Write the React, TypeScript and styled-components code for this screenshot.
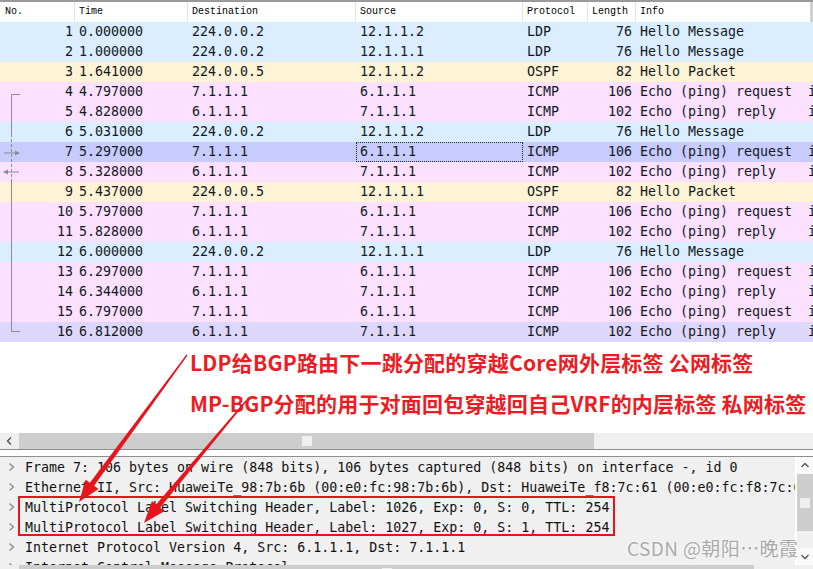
import styled, {createGlobalStyle, css} from "styled-components";

type Packet = {
    no: number
    time: string
    dst: string
    src: string
    proto: string
    len: number
    info: string
}

const REQ = 'Echo (ping) request  id=0x0001, seq=1/256, ttl=254 (reply in 8)'
const REP = 'Echo (ping) reply    id=0x0001, seq=1/256, ttl=254 (request in 7)'

const packets: Packet[] = [
    {no: 1, time: '0.000000', dst: '224.0.0.2', src: '12.1.1.2', proto: 'LDP', len: 76, info: 'Hello Message'},
    {no: 2, time: '1.000000', dst: '224.0.0.2', src: '12.1.1.1', proto: 'LDP', len: 76, info: 'Hello Message'},
    {no: 3, time: '1.641000', dst: '224.0.0.5', src: '12.1.1.2', proto: 'OSPF', len: 82, info: 'Hello Packet'},
    {no: 4, time: '4.797000', dst: '7.1.1.1', src: '6.1.1.1', proto: 'ICMP', len: 106, info: REQ},
    {no: 5, time: '4.828000', dst: '6.1.1.1', src: '7.1.1.1', proto: 'ICMP', len: 102, info: REP},
    {no: 6, time: '5.031000', dst: '224.0.0.2', src: '12.1.1.2', proto: 'LDP', len: 76, info: 'Hello Message'},
    {no: 7, time: '5.297000', dst: '7.1.1.1', src: '6.1.1.1', proto: 'ICMP', len: 106, info: REQ},
    {no: 8, time: '5.328000', dst: '6.1.1.1', src: '7.1.1.1', proto: 'ICMP', len: 102, info: REP},
    {no: 9, time: '5.437000', dst: '224.0.0.5', src: '12.1.1.1', proto: 'OSPF', len: 82, info: 'Hello Packet'},
    {no: 10, time: '5.797000', dst: '7.1.1.1', src: '6.1.1.1', proto: 'ICMP', len: 106, info: REQ},
    {no: 11, time: '5.828000', dst: '6.1.1.1', src: '7.1.1.1', proto: 'ICMP', len: 102, info: REP},
    {no: 12, time: '6.000000', dst: '224.0.0.2', src: '12.1.1.1', proto: 'LDP', len: 76, info: 'Hello Message'},
    {no: 13, time: '6.297000', dst: '7.1.1.1', src: '6.1.1.1', proto: 'ICMP', len: 106, info: REQ},
    {no: 14, time: '6.344000', dst: '6.1.1.1', src: '7.1.1.1', proto: 'ICMP', len: 102, info: REP},
    {no: 15, time: '6.797000', dst: '7.1.1.1', src: '6.1.1.1', proto: 'ICMP', len: 106, info: REQ},
    {no: 16, time: '6.812000', dst: '6.1.1.1', src: '7.1.1.1', proto: 'ICMP', len: 102, info: REP},
]

const protoColor: Record<string, string> = {
    LDP: '#daeeff',
    OSPF: '#fff3d6',
    ICMP: '#fce0ff',
}

const rowBg = (p: Packet) => {
    if (p.no === 7) return '#c8cbfd'
    if (p.no === 16) return '#ddd7fb'
    return protoColor[p.proto]
}

const details = [
    'Frame 7: 106 bytes on wire (848 bits), 106 bytes captured (848 bits) on interface -, id 0',
    'Ethernet II, Src: HuaweiTe_98:7b:6b (00:e0:fc:98:7b:6b), Dst: HuaweiTe_f8:7c:61 (00:e0:fc:f8:7c:61)',
    'MultiProtocol Label Switching Header, Label: 1026, Exp: 0, S: 0, TTL: 254',
    'MultiProtocol Label Switching Header, Label: 1027, Exp: 0, S: 1, TTL: 254',
    'Internet Protocol Version 4, Src: 6.1.1.1, Dst: 7.1.1.1',
    'Internet Control Message Protocol',
]

// tapered red arrow, thin at the start, head at the tip
const arrowPoints = (sx: number, sy: number, tx: number, ty: number) => {
    const dx = tx - sx, dy = ty - sy
    const len = Math.hypot(dx, dy)
    const ux = dx / len, uy = dy / len
    const nx = -uy, ny = ux
    const head = 22, hw = 8, w0 = 0.6, w1 = 2.6
    const bx = tx - ux * head, by = ty - uy * head
    const pts = [
        [sx + nx * w0, sy + ny * w0],
        [bx + nx * w1, by + ny * w1],
        [bx + nx * hw, by + ny * hw],
        [tx, ty],
        [bx - nx * hw, by - ny * hw],
        [bx - nx * w1, by - ny * w1],
        [sx - nx * w0, sy - ny * w0],
    ]
    return pts.map(p => p.map(v => v.toFixed(1)).join(',')).join(' ')
}

const Chevron = () => (
    <ChevronIcon width="7" height="10" viewBox="0 0 7 10">
        <polyline points="1.5,1.5 5.5,5 1.5,8.5" fill="none" stroke="#8a8a8a" strokeWidth="1.3"/>
    </ChevronIcon>
)

const Arrow = ({dir}: { dir: 'up' | 'down' | 'left' }) => {
    const pts = dir === 'up' ? '1.5,6 5,2.5 8.5,6' : dir === 'down' ? '1.5,3 5,6.5 8.5,3' : '6,1.5 2.5,5 6,8.5'
    return (
        <svg width="10" height="10" viewBox="0 0 10 10">
            <polyline points={pts} fill="none" stroke="#555" strokeWidth="1.4"/>
        </svg>
    )
}

function App() {
    return (
        <Page>
            <GlobalStyle/>
            <ListPane>
                <Header>
                    <HeaderCell>No.</HeaderCell>
                    <HeaderCell>Time</HeaderCell>
                    <HeaderCell>Destination</HeaderCell>
                    <HeaderCell>Source</HeaderCell>
                    <HeaderCell>Protocol</HeaderCell>
                    <HeaderCell>Length</HeaderCell>
                    <HeaderCell>Info</HeaderCell>
                </Header>
                <Rows>
                    {packets.map(p => (
                        <Row key={p.no} $bg={rowBg(p)}>
                            <Cell $num>{p.no}</Cell>
                            <Cell>{p.time}</Cell>
                            <Cell>{p.dst}</Cell>
                            <Cell $focused={p.no === 7}>{p.src}</Cell>
                            <Cell>{p.proto}</Cell>
                            <Cell $right>{p.len}</Cell>
                            <Cell>{p.info}</Cell>
                        </Row>
                    ))}
                    <Related width="22" height="320" viewBox="0 0 22 320">
                        <g stroke="#8c8c8c" strokeWidth="1" fill="none">
                            <polyline points="20,72.5 11.5,72.5 11.5,112"/>
                            <line x1="11.5" y1="112" x2="11.5" y2="160" strokeDasharray="3,2"/>
                            <polyline points="11.5,160 11.5,309.5 20,309.5"/>
                            <line x1="4" y1="131" x2="19" y2="131"/>
                            <line x1="4" y1="150" x2="19" y2="150"/>
                        </g>
                        <polygon points="20,131 15,128.5 15,133.5" fill="#8c8c8c"/>
                        <polygon points="3,150 8,147.5 8,152.5" fill="#8c8c8c"/>
                    </Related>
                </Rows>
                <Annotation>
                    <Note>LDP给BGP路由下一跳分配的穿越Core网外层标签 公网标签</Note>
                    <Note>MP-BGP分配的用于对面回包穿越回自己VRF的内层标签 私网标签</Note>
                </Annotation>
            </ListPane>

            <HScroll>
                <ScrollBtn><Arrow dir="left"/></ScrollBtn>
                <Thumb $width={575}><Grip/></Thumb>
            </HScroll>
            <Splitter/>

            <DetailPane>
                <Tree>
                    <DetailRow><Chevron/><DetailText>{details[0]}</DetailText></DetailRow>
                    <DetailRow><Chevron/><DetailText>{details[1]}</DetailText></DetailRow>
                    <Marked>
                        <DetailRow><Chevron/><DetailText>{details[2]}</DetailText></DetailRow>
                        <DetailRow><Chevron/><DetailText>{details[3]}</DetailText></DetailRow>
                    </Marked>
                    <DetailRow><Chevron/><DetailText>{details[4]}</DetailText></DetailRow>
                    <DetailRow><Chevron/><DetailText>{details[5]}</DetailText></DetailRow>
                </Tree>
                <VScroll>
                    <VBtn><Arrow dir="up"/></VBtn>
                    <VThumb><Grip/></VThumb>
                    <VTrack/>
                    <VBtn><Arrow dir="down"/></VBtn>
                </VScroll>
                <HScroll>
                    <ScrollBtn/>
                    <Thumb $width={735}><Grip/></Thumb>
                </HScroll>
                <Corner/>
            </DetailPane>

            <Watermark>CSDN @朝阳…晚霞</Watermark>

            <Overlay width="813" height="569" viewBox="0 0 813 569">
                <polygon points={arrowPoints(187, 355, 79, 502)} fill="#e8141c"/>
                <polygon points={arrowPoints(246, 401, 144, 523)} fill="#e8141c"/>
            </Overlay>
        </Page>
    )
}

export default App

const GlobalStyle = createGlobalStyle`
    html, body {
        margin: 0;
        padding: 0;
        background: #fff;
        overflow: hidden;
    }
`

const mono = `"DejaVu Sans Mono", "Liberation Mono", monospace`

const Page = styled.div`
    position: relative;
    width: 813px;
    height: 569px;
    overflow: hidden;
    display: flex;
    flex-direction: column;
    font-family: ${mono};
    background: #fff;

    & > * {
        flex-shrink: 0;
    }
`

const ListPane = styled.div`
    height: 431px;
    display: flex;
    flex-direction: column;
    border-top: 2px solid #9a9a9a;
`

const columns = `75px 113px 168px 167px 65px 48px 1fr`

const Header = styled.div`
    display: grid;
    grid-template-columns: ${columns};
    height: 20px;
    background: #fff;
`

const HeaderCell = styled.div`
    font: 10px/20px "Liberation Mono", monospace;
    color: #000;
    padding-left: 4px;
    border-right: 1px solid #e3e3e3;
    white-space: nowrap;
    overflow: hidden;

    &:first-child {
        padding-left: 5px;
    }
    &:last-child {
        border-right: 3px solid #d0d0d0;
    }
`

const Rows = styled.div`
    position: relative;
    flex-shrink: 0;
`

const Row = styled.div<{ $bg: string }>`
    display: grid;
    grid-template-columns: ${columns};
    height: 20px;
    background: ${props => props.$bg};
    color: #12181c;
    font-size: 13.3px;
    line-height: 20px;
`

type CellProps = {
    $num?: boolean,
    $right?: boolean,
    $focused?: boolean,
}

const Cell = styled.div<CellProps>`
    padding: 0 4px;
    white-space: pre;
    overflow: hidden;

    ${props => props.$num && css`
        text-align: right;
        padding-right: 2px;
    `}

    ${props => props.$right && css`
        text-align: right;
    `}

    ${props => props.$focused && css`
        outline: 1px dotted #222;
        outline-offset: -1px;
    `}
`

const Related = styled.svg`
    position: absolute;
    left: 0;
    top: 0;
`

const Annotation = styled.div`
    flex: 1;
    padding-left: 190px;
`

const Note = styled.div`
    font: 700 21px/41px "Noto Sans CJK SC", "Noto Sans", sans-serif;
    letter-spacing: 0.2px;
    color: #ec1c24;
    white-space: nowrap;
`

const HScroll = styled.div`
    display: flex;
    height: 16px;
    background: #efefef;
`

const ScrollBtn = styled.div`
    width: 19px;
    flex-shrink: 0;
    display: flex;
    align-items: center;
    justify-content: center;
`

const Thumb = styled.div<{ $width: number }>`
    width: ${props => props.$width}px;
    flex-shrink: 0;
    background: #cdcdcd;
    display: flex;
    align-items: center;
    justify-content: center;
`

const Grip = styled.div`
    width: 10px;
    height: 10px;
    background: #efefef;
`

const Splitter = styled.div`
    height: 6px;
    border-top: 1px solid #8e8e8e;
    background: #fff;
`

const DetailPane = styled.div`
    display: grid;
    grid-template-columns: 797px 16px;
    grid-template-rows: 108px 16px;
    border-top: 1px solid #8e8e8e;
    background: #f0f0f0;
`

const Tree = styled.div`
    overflow: hidden;
    border-right: 2px solid #fff;
`

const DetailRow = styled.div`
    display: flex;
    align-items: center;
    height: 20px;
    padding-left: 8px;
    gap: 10px;
`

const ChevronIcon = styled.svg`
    flex-shrink: 0;
`

const DetailText = styled.span`
    font-size: 13.3px;
    color: #111;
    white-space: pre;
    flex-shrink: 0;
`

const Marked = styled.div`
    position: relative;

    &::after {
        content: "";
        position: absolute;
        left: 18px;
        width: 597px;
        top: -1px;
        bottom: 1px;
        border: 2px solid #e8141c;
        box-sizing: border-box;
    }
`

const VScroll = styled.div`
    display: flex;
    flex-direction: column;
    background: #f0f0f0;
`

const VBtn = styled.div`
    height: 17px;
    display: flex;
    align-items: center;
    justify-content: center;
    background: #fafafa;
`

const VThumb = styled.div`
    height: 57px;
    background: #cdcdcd;
    display: flex;
    align-items: center;
    justify-content: center;
`

const VTrack = styled.div`
    flex: 1;
`

const Corner = styled.div`
    background: #efefef;
`

const Watermark = styled.div`
    position: absolute;
    left: 627px;
    top: 536px;
    font: 19px/24px "Noto Sans CJK SC", "Noto Sans", sans-serif;
    letter-spacing: 0.4px;
    color: #a9a9a9;
    text-shadow: 0 0 2px #fff, 0 0 2px #fff;
    white-space: nowrap;
`

const Overlay = styled.svg`
    position: absolute;
    left: 0;
    top: 0;
    pointer-events: none;
`
